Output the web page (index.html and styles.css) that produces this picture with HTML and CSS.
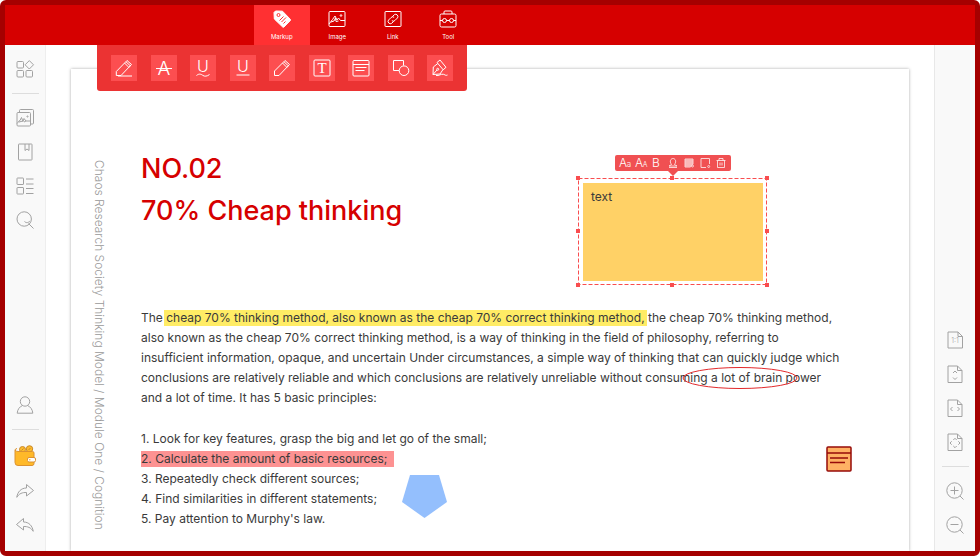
FILE: index.html
```html
<!DOCTYPE html>
<html lang="en">
<head>
<meta charset="utf-8">
<title>PDF Editor</title>
<link rel="stylesheet" href="styles.css">
</head>
<body>
<div class="app">
  <header class="topbar">
    <nav class="tabs" aria-label="Modes">
      <button class="tab tab-active" type="button">
        <svg class="icon" viewBox="0 0 18 18"><path d="M1 2.500 2.500 1 9.500 1.200 17.300 9.300a1 1 0 0 1 0 1.300L11 17a1 1 0 0 1-1.300 0L1.300 9z" fill="#fff"/><circle cx="5.500" cy="5" r="1.500" class="cut"/><path d="M6.500 10.500l4-4M8.500 12l4.500-4.500M10.500 13.500l2-2" class="cut"/></svg>
        Markup
      </button>
      <button class="tab" type="button">
        <svg class="icon" viewBox="0 0 18 18"><rect x="1" y="1.500" width="16" height="15" rx="1"/><path d="M1 14l3.500-4.500L7 6l2 4 1.500-2 2 2.500H17M3 12l3-1 1.500-3 .5 3.500 2.500-.5"/><circle cx="13" cy="5.500" r=".8"/></svg>
        Image
      </button>
      <button class="tab" type="button">
        <svg class="icon" viewBox="0 0 18 18"><rect x="1" y="1.500" width="16" height="15" rx=".5"/><path d="M8.300 6.700l2-2a2.300 2.300 0 0 1 3.200 3.200l-2.600 2.600a2.300 2.300 0 0 1-3 .2M9.700 11.300l-2 2a2.300 2.300 0 0 1-3.200-3.200l2.600-2.600a2.300 2.300 0 0 1 3-.2"/></svg>
        Link
      </button>
      <button class="tab" type="button">
        <svg class="icon" viewBox="0 0 18 18"><rect x="1" y="4" width="16" height="13" rx="1.500"/><path d="M5 4V2a1 1 0 0 1 1-1h6a1 1 0 0 1 1 1V4M1 10.500h2.500M7.500 10.500h3M14.500 10.500H17"/><circle cx="5.500" cy="10.500" r="2"/><circle cx="12.500" cy="10.500" r="2"/></svg>
        Tool
      </button>
    </nav>
  </header>

  <div class="workspace">
    <nav class="rail rail-left" aria-label="Panels">
      <button class="rail-btn" type="button" aria-label="Components"><svg class="icon" viewBox="0 0 18 18"><rect x="1" y="1.500" width="6.500" height="6.500" rx="1"/><rect x="1" y="10.500" width="6.500" height="6.500" rx="1"/><rect x="10" y="10.500" width="6.500" height="6.500" rx="1"/><path d="M13.300.6 17.500 4.800 13.300 9 9.100 4.800z"/></svg></button>
      <hr class="rail-line">
      <button class="rail-btn" type="button" aria-label="Thumbnails"><svg class="icon" viewBox="0 0 18 18"><rect x="1" y="3.500" width="13.500" height="13.500" rx="1"/><path d="M3.500 3.500V1.500a1 1 0 0 1 1-1h12a1 1 0 0 1 1 1V14a1 1 0 0 1-1 1h-2M1 14.500c1.500-1 1-2.500 3-3l1.500-3 1.500 4 1-3 2 2.500h4.500M3 13l4-1M8 13l2-1"/><circle cx="11.500" cy="7.500" r=".6"/></svg></button>
      <button class="rail-btn" type="button" aria-label="Bookmarks"><svg class="icon" viewBox="0 0 18 18"><rect x="2.500" y="1" width="13.500" height="16" rx=".5"/><path d="M9 1v6.500l2-1.500 2 1.500V1"/></svg></button>
      <button class="rail-btn" type="button" aria-label="Outline"><svg class="icon" viewBox="0 0 18 18"><rect x="1" y="1" width="6.500" height="6.500" rx=".5"/><rect x="1" y="10.500" width="6.500" height="6.500" rx=".5"/><path d="M10 2h7.500M10 7h7.500M10 11.500h7.500M10 16.500h7.500"/></svg></button>
      <button class="rail-btn" type="button" aria-label="Search"><svg class="icon" viewBox="0 0 18 18"><circle cx="8.200" cy="8" r="7.200"/><path d="M8.500 10.500c2 2 4 1 5.500-.5M12.500 12.500l5 5"/></svg></button>
      <span class="rail-space"></span>
      <button class="rail-btn" type="button" aria-label="Account"><svg class="icon" viewBox="0 0 18 18"><circle cx="9" cy="5.500" r="4.700"/><path d="M6.500 9.500C3.500 10.800 1.500 13.500 1.200 17.200h15.600c-.3-3.700-2.300-6.400-5.300-7.700"/></svg></button>
      <hr class="rail-line">
      <button class="rail-btn rail-btn-wallet" type="button" aria-label="Wallet"><svg class="wallet" viewBox="0 0 22 22"><circle cx="8.500" cy="4.500" r="3" fill="#fdbb2d" stroke="#c98a2c"/><circle cx="15.500" cy="3.900" r="3.200" fill="#fdbb2d" stroke="#c98a2c"/><path d="M1 5q0-1 2-1.500M1 5q1 1.500 3 1.500h14.500q1.500 0 1.500 1.500v10.500q0 2-2 2H4q-3 0-3-3z" fill="#ffb929" stroke="#dc9231"/><path d="M7.500 5.500l2-2M14.500 5l2-2" stroke="#c98a2c"/><rect x="13.500" y="12.500" width="8" height="4.500" rx="1.500" fill="#fff" stroke="#dc9231"/><circle cx="15.800" cy="14.700" r=".8" fill="#ffb929"/></svg></button>
      <button class="rail-btn" type="button" aria-label="Redo"><svg class="icon" viewBox="0 0 18 18"><path d="M10.500 2.500 17.500 8.500l-7 5.500v-3.500C6.500 10.300 3 11.500.8 15.300 1.500 10 5 6 10.500 6z"/></svg></button>
      <button class="rail-btn" type="button" aria-label="Undo"><svg class="icon" viewBox="0 0 18 18"><path d="M7.500 2.500.5 8.500l7 5.500v-3.500c4-.2 7.500 1 9.700 4.800C16.500 10 13 6 7.500 6z"/></svg></button>
    </nav>

    <main class="canvas">
      <div class="markup-bar" role="toolbar" aria-label="Markup tools">
        <button class="mark-btn" type="button" aria-label="Highlight"><svg class="icon" viewBox="0 0 18 18"><path d="M1.300 16.500v-4L12 1.500l4.500 4L6 16.500zM9.500 4l4.500 4.500M11 2.800l4.500 4.200M3 17h14"/></svg></button>
        <button class="mark-btn" type="button" aria-label="Strikethrough"><svg class="icon" viewBox="0 0 18 18"><text class="glyph" x="9" y="16" font-size="19">A</text><path d="M1 9.500h16"/></svg></button>
        <button class="mark-btn" type="button" aria-label="Squiggly underline"><svg class="icon" viewBox="0 0 18 18"><text class="glyph" x="9" y="13" font-size="16">U</text><path d="M2.500 16.500c3-2.500 5-1 6.500 0s4 1 6.500-1"/></svg></button>
        <button class="mark-btn" type="button" aria-label="Underline"><svg class="icon" viewBox="0 0 18 18"><text class="glyph" x="9" y="13" font-size="16">U</text><path d="M2.500 16h13"/></svg></button>
        <button class="mark-btn" type="button" aria-label="Pencil"><svg class="icon" viewBox="0 0 18 18"><path d="M1.500 16.500v-4.500L12 1.500l4.500 4L6 16.500zM9.500 4l4.500 4.500M11 2.800l4.500 4.200"/></svg></button>
        <button class="mark-btn" type="button" aria-label="Text box"><svg class="icon" viewBox="0 0 18 18"><rect x="1" y="1" width="16" height="16" rx="1"/><text class="glyph glyph-serif" x="9" y="14" font-size="15">T</text></svg></button>
        <button class="mark-btn" type="button" aria-label="Note"><svg class="icon" viewBox="0 0 18 18"><rect x="1" y="1.500" width="16" height="15.500" rx="1"/><path d="M1 5.500h16M3.500 8.500h11M3.500 11.500h9"/></svg></button>
        <button class="mark-btn" type="button" aria-label="Shapes"><svg class="icon" viewBox="0 0 18 18"><path d="M7 11.500H1.500v-10h10v5"/><circle cx="12" cy="11.700" r="4.800"/></svg></button>
        <button class="mark-btn" type="button" aria-label="Pen"><svg class="icon" viewBox="0 0 18 18"><path d="M6 3.500 9 1l6 7.300-2.800 2.500zM6.800 4.500 2.300 8l-.3 7.500 7-.5 3-4.500M2 15.500l4-4.500"/><circle cx="6.700" cy="10.300" r="1"/><path d="M5 16.500c3 .8 5-2 7.500-1.200s2 1.500 4 .7"/></svg></button>
      </div>

      <article class="page">
        <p class="side-title">Chaos Research Society Thinking Model / Module One / Cognition</p>
        <div class="content">
          <h1 class="title">NO.02<br>70% Cheap thinking</h1>
          <p class="body-text">The <mark class="hl-yellow">cheap 70% thinking method, also known as the cheap 70% correct thinking method,</mark> the cheap 70% thinking method,<br>also known as the cheap 70% correct thinking method, is a way of thinking in the field of philosophy, referring to<br>insufficient information, opaque, and uncertain Under circumstances, a simple way of thinking that can quickly judge which<br>conclusions are relatively reliable and which conclusions are relatively unreliable without consuming a lot of brain power<br>and a lot of time. It has 5 basic principles:</p>
          <p class="body-text">1. Look for key features, grasp the big and let go of the small;<br><mark class="hl-red">2. Calculate the amount of basic resources;</mark><br>3. Repeatedly check different sources;<br>4. Find similarities in different statements;<br>5. Pay attention to Murphy's law.</p>
        </div>

        <div class="note">
          <div class="note-bar" role="toolbar" aria-label="Text format">
            <button class="note-btn" type="button" aria-label="Font"><svg class="mini" viewBox="0 0 16 16"><text class="glyph" x="6" y="12" font-size="12">A</text><text class="glyph" x="12" y="12" font-size="8">a</text></svg></button>
            <button class="note-btn" type="button" aria-label="Font size"><svg class="mini" viewBox="0 0 16 16"><text class="glyph" x="6" y="12" font-size="12">A</text><text class="glyph" x="12" y="12" font-size="7">A</text></svg></button>
            <button class="note-btn" type="button" aria-label="Bold"><svg class="mini" viewBox="0 0 16 16"><text class="glyph" x="7" y="12" font-size="12">B</text></svg></button>
            <button class="note-btn" type="button" aria-label="Text colour"><svg class="mini mini-soft" viewBox="0 0 16 16"><path d="M6.500 9.500C4 6 6 3.500 8 3.500S12 6 9.500 9.500L12 11H4zM4 12.500h8"/></svg></button>
            <button class="note-btn" type="button" aria-label="Fill"><svg class="mini mini-soft" viewBox="0 0 16 16"><path d="M4 4h8v5l-2.500 3H4z" fill="#fff" fill-opacity=".6"/><path d="M4 6h8M4 8h8M4 10h7"/><circle cx="11.500" cy="11" r="1"/></svg></button>
            <button class="note-btn" type="button" aria-label="Border"><svg class="mini mini-soft" viewBox="0 0 16 16"><path d="M9 12.500H4v-9h8.500V9"/><circle cx="11.700" cy="11.500" r="1"/></svg></button>
            <button class="note-btn" type="button" aria-label="Delete"><svg class="mini mini-soft" viewBox="0 0 16 16"><path d="M3.500 5.500h9M6 5.500v-2h4v2M4.500 5.500v7h7v-7M7 7.500v3M9 7.500v3"/></svg></button>
          </div>
          <svg class="note-frame" aria-hidden="true"><path d="M2.500 2.500h188v106H2.500z" fill="none" stroke="#f94d4f" stroke-dasharray="4 2"/><path fill="#f94d4f" d="M0 0h4v4H0zM94 0h4v4h-4zM189 0h4v4h-4zM0 53h4v4H0zM189 53h4v4h-4zM0 107h4v4H0zM94 107h4v4h-4zM189 107h4v4h-4z"/></svg>
          <textarea class="note-text" aria-label="Note text" spellcheck="false">text</textarea>
        </div>

        <svg class="ellipse" viewBox="0 0 116 24" aria-hidden="true"><ellipse cx="58" cy="12" rx="57" ry="10.500" fill="none" stroke="#e2292b"/></svg>
        <svg class="pentagon" viewBox="0 0 45 43" aria-hidden="true"><path d="M8 0h29l8 27-22.500 16L0 27z" fill="#94bffd"/></svg>
        <button class="sticky" type="button" aria-label="Open comment"><svg viewBox="0 0 26 26"><rect x="1" y="1" width="24" height="24" rx="1" fill="#ffb164" stroke="#970b09" stroke-width="1.500"/><path d="M1 7h24M4 12h18M4 16.500h15" fill="none" stroke="#970b09" stroke-width="1.500"/></svg></button>
      </article>
    </main>

    <nav class="rail rail-right" aria-label="View">
      <span class="rail-space"></span>
      <button class="rail-btn" type="button" aria-label="Actual size"><svg class="icon" viewBox="0 0 18 18"><path d="M2 1h10l4.500 4.500V17H2zM12 1v4.500h4.500"/><text class="scale" x="9" y="12" font-size="7">1:1</text></svg></button>
      <button class="rail-btn" type="button" aria-label="Fit height"><svg class="icon" viewBox="0 0 18 18"><path d="M2 1h9.500l4.500 4.500V17.500H2zM11.500 1v4.500H16M7 8l2-2 2 2M7 12.500l2 2 2-2"/></svg></button>
      <button class="rail-btn" type="button" aria-label="Fit width"><svg class="icon" viewBox="0 0 18 18"><path d="M2 1h9.500l4.500 4.500V17.500H2zM11.500 1v4.500H16M6.500 8l-2 2 2 2M11.500 8l2 2-2 2"/></svg></button>
      <button class="rail-btn" type="button" aria-label="Fit page"><svg class="icon" viewBox="0 0 18 18"><path d="M2 1h9.500l4.500 4.500V17.500H2zM11.500 1v4.500H16M7.300 7 9 5.300 10.700 7M7.300 13 9 14.700l1.700-1.700M5.700 8.300 4 10l1.700 1.700M12.300 8.300 14 10l-1.700 1.700"/></svg></button>
      <hr class="rail-line">
      <button class="rail-btn" type="button" aria-label="Zoom in"><svg class="icon" viewBox="0 0 18 18"><circle cx="8.500" cy="8.500" r="7.700"/><path d="M14 14l3.500 3.500M4.500 8.500h8M8.500 4.500v8"/></svg></button>
      <button class="rail-btn" type="button" aria-label="Zoom out"><svg class="icon" viewBox="0 0 18 18"><circle cx="8.500" cy="8.500" r="7.700"/><path d="M14 14l3.500 3.500M4.500 8.500h8"/></svg></button>
    </nav>
  </div>
</div>
</body>
</html>
```
FILE: styles.css
```css
* {
  box-sizing: border-box;
}

body {
  margin: 0;
  background: #fff;
  color: #3a3a3a;
  font-family: Inter, "Liberation Sans", sans-serif;
}

button {
  display: flex;
  align-items: center;
  justify-content: center;
  margin: 0;
  padding: 0;
  border: 0;
  background: none;
  color: inherit;
  font: inherit;
}

.app {
  display: flex;
  flex-direction: column;
  min-height: 100vh;
  border: 5px solid #a50000;
  border-radius: 6px;
  background: #a50000;
}

.icon,
.mini {
  display: block;
  overflow: visible;
  width: 18px;
  height: 18px;
  fill: none;
  stroke: currentColor;
  stroke-width: 1;
  stroke-linejoin: round;
}

.mini {
  width: 16px;
  height: 16px;
}

.mini-soft {
  opacity: 0.75;
}

.glyph,
.scale {
  fill: currentColor;
  stroke: none;
  font-weight: 300;
  text-anchor: middle;
}

.glyph-serif {
  font-family: "Liberation Serif", serif;
}

/* Top bar */
.topbar {
  padding-left: 249px;
  background: #d60000;
  color: #fff;
}

.tabs {
  display: flex;
  width: 222px;
}

.tab {
  flex: 1;
  flex-direction: column;
  gap: 5px;
  height: 40px;
  font-size: 6px;
  line-height: 8px;
}

.tab-active {
  background: #ff3032;
}

.cut {
  fill: none;
  stroke: #ff3032;
}

/* Side rails */
.workspace {
  display: flex;
  flex: 1;
}

.rail {
  display: flex;
  flex-direction: column;
  flex: none;
  width: 41px;
  padding: 7px 0 9px;
  background: #f9f9f9;
  color: #a2a2a2;
}

.rail-left {
  border-right: 1px solid #eee;
}

.rail-right {
  border-left: 1px solid #e8e8e8;
}

.rail-btn {
  height: 34px;
}

.rail-btn-wallet {
  height: 37px;
}

.wallet {
  width: 22px;
  height: 22px;
  fill: none;
}

.rail-line {
  width: 27px;
  height: 1px;
  margin: 7px auto;
  border: 0;
  background: #ddd;
}

.rail-space {
  flex: 1;
}

/* Document area */
.canvas {
  position: relative;
  display: flex;
  flex: 1;
  padding: 24px 25px 0;
  background: #fff;
}

.markup-bar {
  position: absolute;
  z-index: 2;
  top: 0;
  left: 51px;
  display: flex;
  justify-content: space-between;
  width: 370px;
  padding: 10px 14px;
  border-radius: 0 0 3px 3px;
  background: #eb3333;
  color: #fff;
}

.mark-btn {
  width: 26px;
  height: 26px;
  background: #fc4e50;
}

.page {
  position: relative;
  display: flex;
  flex: 1;
  background: #fff;
  box-shadow: 0 0 3px #aaa;
  clip-path: inset(-4px -4px 0 -4px);
}

.side-title {
  width: 70px;
  margin: 0;
  padding: 91px 35px 0 0;
  color: #999;
  font-size: 12px;
  font-weight: 300;
  line-height: 14px;
  white-space: nowrap;
  writing-mode: vertical-rl;
}

.content {
  flex: 1;
  padding-top: 79px;
}

.title {
  margin: 0 0 76px;
  color: #d60000;
  font-size: 27px;
  font-weight: 500;
  line-height: 42px;
}

.body-text {
  margin: 0 0 21px;
  font-size: 12px;
  line-height: 20px;
  white-space: nowrap;
}

.hl-yellow,
.hl-red {
  padding-bottom: 1px;
  color: inherit;
}

.hl-yellow {
  margin: 0 -2px;
  padding-right: 2px;
  padding-left: 2px;
  background: #ffec65;
}

.hl-red {
  padding-right: 7px;
  background: #fd9292;
}

/* Annotations placed on the page */
.note {
  position: absolute;
  top: 86px;
  left: 505px;
  display: flex;
  flex-direction: column;
  align-items: center;
  width: 193px;
}

.note-bar {
  position: relative;
  display: flex;
  padding: 0 2px;
  margin-bottom: 5px;
  border-radius: 2px;
  background: #f05052;
  color: #fff;
}

.note-bar::after {
  position: absolute;
  top: 100%;
  left: 50%;
  margin-left: -5px;
  border: 5px solid transparent;
  border-top-color: #f05052;
  content: "";
}

.note-frame {
  width: 193px;
  height: 111px;
}

.note-text {
  position: absolute;
  top: 28px;
  left: 7px;
  width: 180px;
  height: 98px;
  padding: 7px 8px;
  border: 0;
  background: #ffd166;
  color: #3a3a3a;
  font: 12px/14px Inter, "Liberation Sans", sans-serif;
  resize: none;
}

.ellipse {
  position: absolute;
  top: 297px;
  left: 611px;
  width: 116px;
  height: 24px;
}

.pentagon {
  position: absolute;
  top: 406px;
  left: 331px;
  width: 45px;
  height: 43px;
}

.sticky {
  position: absolute;
  top: 377px;
  left: 755px;
  width: 26px;
  height: 26px;
}
```
